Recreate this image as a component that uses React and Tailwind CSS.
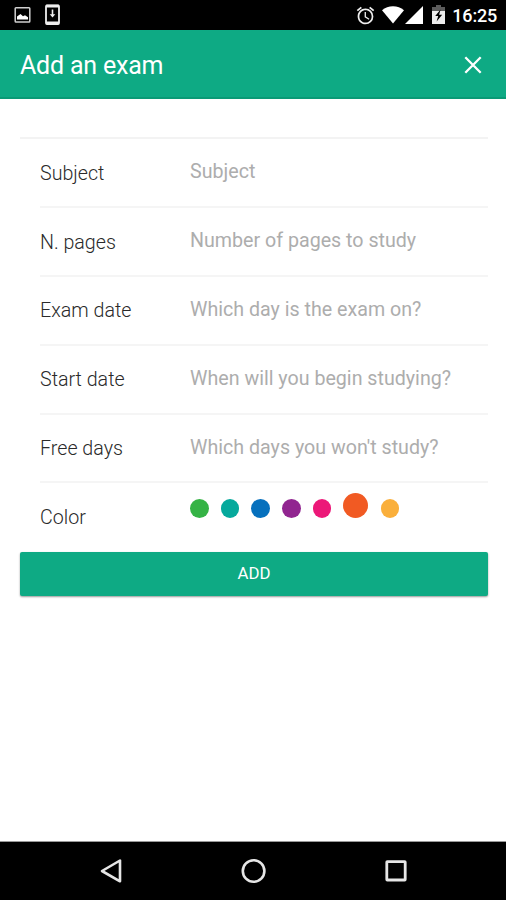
import { useState } from "react";
import { MdAlarm } from "react-icons/md";

const FIELDS = [
  { label: "Subject", placeholder: "Subject" },
  { label: "N. pages", placeholder: "Number of pages to study" },
  { label: "Exam date", placeholder: "Which day is the exam on?" },
  { label: "Start date", placeholder: "When will you begin studying?" },
  { label: "Free days", placeholder: "Which days you won't study?" },
];

const COLORS = [
  { name: "green", className: "bg-[#35b345]" },
  { name: "teal", className: "bg-[#06a99c]" },
  { name: "blue", className: "bg-[#0670bd]" },
  { name: "purple", className: "bg-[#912590]" },
  { name: "pink", className: "bg-[#ec1878]" },
  { name: "orange", className: "bg-[#f15a23]" },
  { name: "yellow", className: "bg-[#faaf3b]" },
];

function StatusBar() {
  return (
    <div className="flex h-[30px] shrink-0 items-center bg-black pl-[14px] pr-[9px] text-white">
      <svg width="17" height="18" viewBox="0 0 17 18" className="mr-[13px]">
        <rect x="1.2" y="1.7" width="14.6" height="14.3" rx="0.8" fill="none" stroke="#d0d0d0" strokeWidth="1.5" />
        <path d="M3 13.5V10.5l3.5-2.5 2.5 2.3 2-1 3 2v2.2z" fill="#fff" />
      </svg>
      <svg width="17" height="22" viewBox="0 0 17 22">
        <rect x="2" y="1.5" width="13" height="18.5" rx="1" fill="none" stroke="#eee" strokeWidth="1.8" />
        <path d="M2 2.2h13M2 18.8h13" stroke="#eee" strokeWidth="2.8" />
        <path d="M7.7 5.5h1.6v4.7h2l-2.8 3.4-2.8-3.4h2z" fill="#eee" />
      </svg>

      <div className="ml-auto flex items-center">
        <MdAlarm className="mr-[6px] size-[21px] text-[#eee]" />
        <svg width="22" height="18" viewBox="0 0 22 18" className="mr-px">
          <path d="M0 4.2C6-1 16-1 22 4.2L11 17.5z" fill="#fff" />
        </svg>
        <svg width="18" height="18" viewBox="0 0 18 18" className="mr-[9px]">
          <path d="M18 0v18H0z" fill="#fff" />
        </svg>
        <svg width="13" height="20" viewBox="0 0 13 20" className="mr-[7px]">
          <path d="M4 0h5v2h4v4H0V2h4z" fill="#5c5c5c" />
          <path d="M0 6h13v13H0z" fill="#eee" />
          <path d="M8.6 4.5 3.2 11h3l-1.6 5.6L10.2 9.8H7.1z" fill="#000" />
        </svg>
        <span className="pt-[2px] text-[18px] font-medium leading-none tracking-[-0.2px]">16:25</span>
      </div>
    </div>
  );
}

function Header() {
  return (
    <header className="flex h-[69px] shrink-0 items-center justify-between border-b-2 border-[#0a9a76] bg-[#0eaa84] pl-[20px] pr-[24px] pt-[2px] text-white">
      <h1 className="pt-px text-[25px] leading-none tracking-[-0.2px]">Add an exam</h1>
      <button aria-label="Close">
        <svg width="18" height="18" viewBox="0 0 18 18">
          <path d="m1.3 1.3 15.4 15.4M16.7 1.3 1.3 16.7" stroke="#fff" strokeWidth="2.3" />
        </svg>
      </button>
    </header>
  );
}

function NavBar() {
  return (
    <nav className="flex h-[58px] shrink-0 items-center justify-between bg-black pl-[99px] pr-[98px]">
      <svg width="24" height="26" viewBox="0 0 24 26">
        <path d="M21 2.5v20.8L3 13z" fill="none" stroke="#e6e6e6" strokeWidth="2.6" strokeLinejoin="round" />
      </svg>
      <svg width="26" height="26" viewBox="0 0 26 26">
        <circle cx="12.6" cy="13" r="10.8" fill="none" stroke="#e6e6e6" strokeWidth="2.6" />
      </svg>
      <svg width="24" height="26" viewBox="0 0 24 26">
        <rect x="2.8" y="3.6" width="18.4" height="18.4" rx="0.5" fill="none" stroke="#e6e6e6" strokeWidth="2.8" />
      </svg>
    </nav>
  );
}

export default function App() {
  const [color, setColor] = useState("orange");

  return (
    <div className="flex h-[900px] w-[506px] flex-col overflow-hidden bg-white font-['Roboto',sans-serif]">
      <StatusBar />
      <Header />

      <main className="flex-1 pl-[20px] pr-[18px] pt-[38px]">
        <div className="border-t-2 border-[#f3f3f3] pl-[20px]">
          {FIELDS.map((f) => (
            <div
              key={f.label}
              className="flex h-[68.9px] items-center border-b-2 border-[#f5f5f5] text-[19.65px]"
            >
              <label className="w-[150px] pt-[2px] font-light text-[#2a2a2a]">{f.label}</label>
              <input
                className="mb-px min-w-0 flex-1 outline-none placeholder:text-[#adadad] placeholder:opacity-100"
                placeholder={f.placeholder}
              />
            </div>
          ))}

          <div className="flex h-[68.5px] text-[19.65px]">
            <span className="w-[150px] pt-[20px] font-light text-[#2a2a2a]">Color</span>
            <div className="flex h-[34.5px] items-end gap-[12.2px]">
              {COLORS.map((c) => (
                <button
                  key={c.name}
                  aria-label={c.name}
                  onClick={() => setColor(c.name)}
                  className={`rounded-full ${c.className} ${
                    color === c.name ? "size-[25px]" : "size-[18.5px]"
                  }`}
                />
              ))}
            </div>
          </div>
        </div>

        <button className="block h-[44px] w-full rounded-[2px] bg-[#0eaa84] text-[16.8px] text-white shadow-[0_1px_2px_rgba(0,0,0,0.4)]">
          ADD
        </button>
      </main>

      <div className="h-px shrink-0 bg-[#999]" />
      <NavBar />
    </div>
  );
}
